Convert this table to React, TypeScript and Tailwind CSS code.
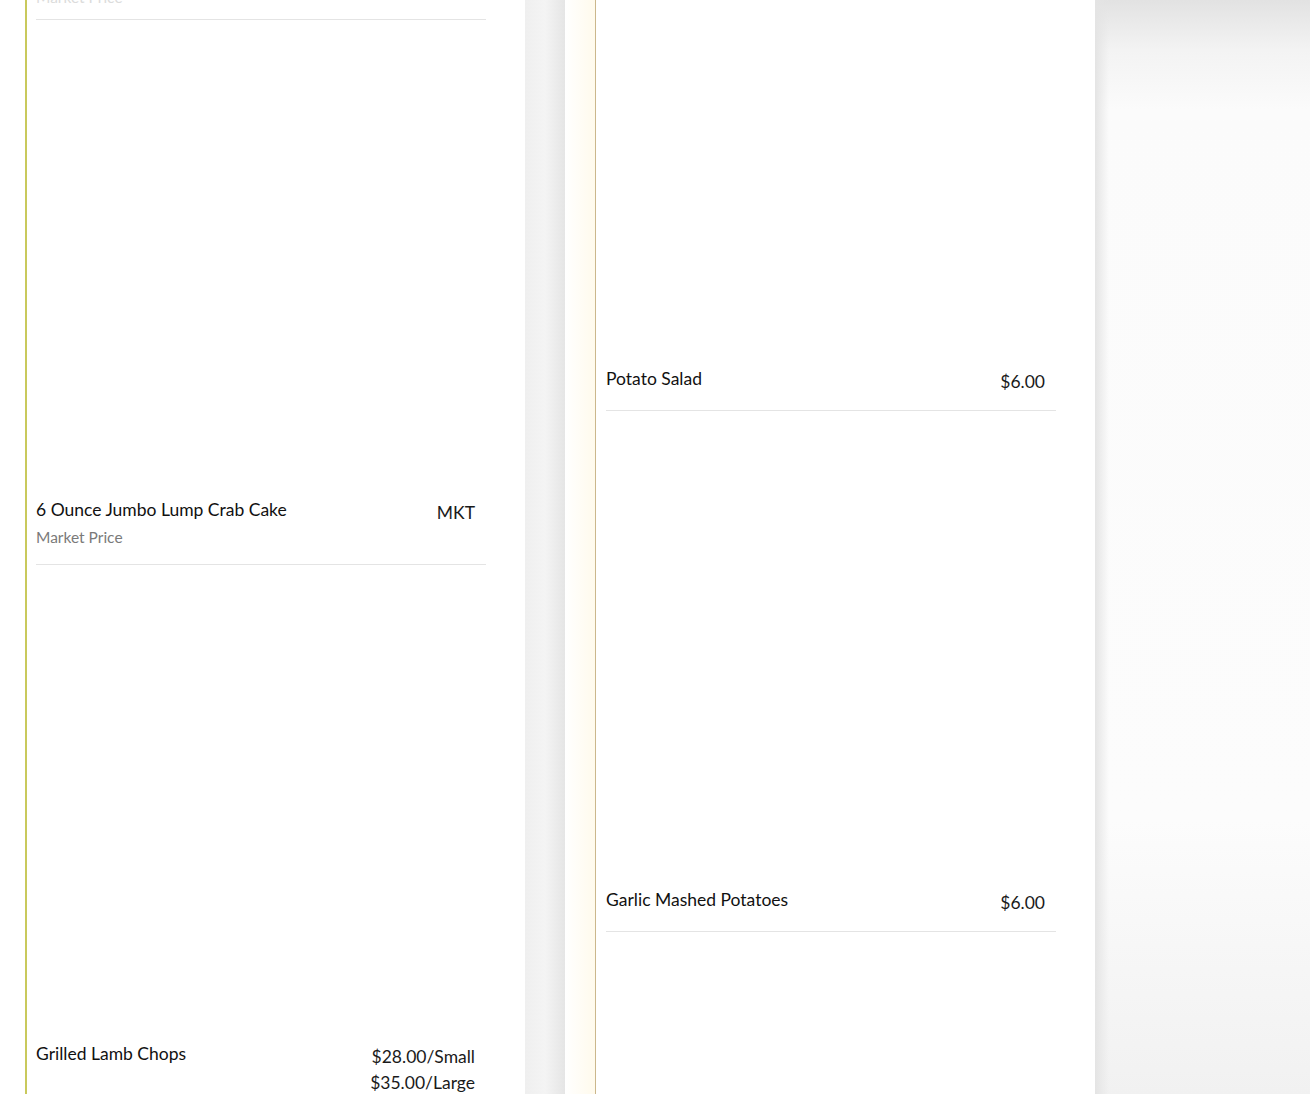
import React from 'react';

type Item = {
  title: string;
  desc?: string;
  prices: string[];
  blank: number;
};

const leftItems: Item[] = [
  { title: '6 Ounce Jumbo Lump Crab Cake', desc: 'Market Price', prices: ['MKT'], blank: 476 },
  { title: 'Grilled Lamb Chops', prices: ['$28.00/Small', '$35.00/Large'], blank: 475 },
];

const rightItems: Item[] = [
  { title: 'Potato Salad', prices: ['$6.00'], blank: 365 },
  { title: 'Garlic Mashed Potatoes', prices: ['$6.00'], blank: 475 },
];

const MenuItem: React.FC<{ item: Item }> = ({ item }) => (
  <div className="border-b border-[#e4e4e4] pb-[15px]">
    {/* image slot, not loaded yet */}
    <div style={{ height: item.blank }} />
    <div className="mt-px flex justify-between items-start">
      <div>
        <h3 className="text-[17.5px] leading-[26px] text-[#111]">{item.title}</h3>
        {item.desc && <p className="mt-[2px] text-[15.5px] leading-[24px] text-[#7a7a7a]">{item.desc}</p>}
      </div>
      <div className="mt-[3px] pr-[11px] text-right text-[17.5px] leading-[26px] text-[#1a1a1a]">
        {item.prices.map((p) => (
          <div key={p}>{p}</div>
        ))}
      </div>
    </div>
  </div>
);

export default function App() {
  return (
    <div className="flex h-[1094px] w-[1310px] overflow-hidden bg-white font-['Lato',sans-serif]">
      <div className="w-[25px] shrink-0 bg-white" />

      <section className="w-[500px] shrink-0 bg-white border-l-2 border-[#c9c95c] pl-[9px] pr-[39px]">
        <div className="h-[20px] border-b border-[#e4e4e4] pb-[14px] flex items-end">
          <p className="text-[15.5px] leading-[16px] text-[#dcdcdc]">Market Price</p>
        </div>
        {leftItems.map((it) => (
          <MenuItem key={it.title} item={it} />
        ))}
      </section>

      <div className="w-[40px] shrink-0 bg-[linear-gradient(90deg,#efefef,#f4f4f4_50%,#e5e5e5)]" />

      <section className="w-[530px] shrink-0 flex bg-white">
        <div className="w-[30px] shrink-0 bg-[linear-gradient(90deg,#ffffff,#fffaec)]" />
        <div className="flex-1 border-l border-[#cbb78c] pl-[10px] pr-[39px]">
          {rightItems.map((it) => (
            <MenuItem key={it.title} item={it} />
          ))}
        </div>
      </section>

      <div className="flex-1 bg-[image:linear-gradient(90deg,#e4e4e4,rgba(250,250,250,0)_14px),linear-gradient(180deg,#e2e2e2,#f3f3f3_50px,#fbfbfb_110px,#fcfcfc_75%,#f1f1f1)]" />
    </div>
  );
}
